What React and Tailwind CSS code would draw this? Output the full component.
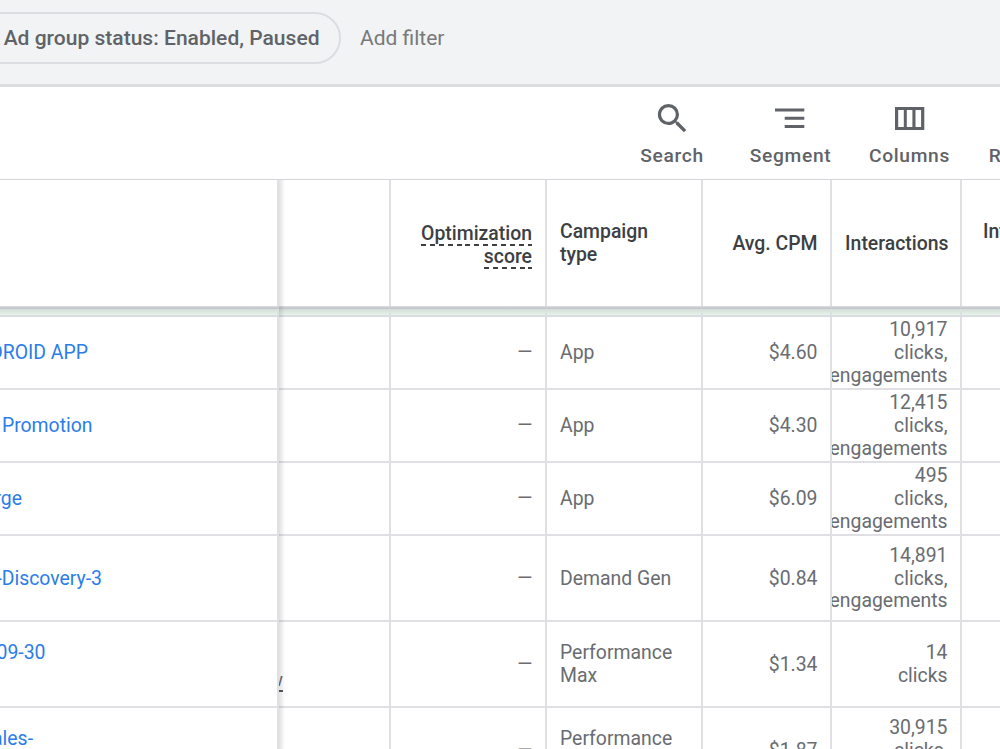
const CAMPAIGNS = [
  {
    name: ["DROID APP"],
    end: 88,
    type: "App",
    cpm: "$4.60",
    interactions: ["10,917", "clicks,", "engagements"],
    height: "h-[73px]",
  },
  {
    name: ["App Promotion"],
    end: 92.5,
    type: "App",
    cpm: "$4.30",
    interactions: ["12,415", "clicks,", "engagements"],
    height: "h-[73px]",
  },
  {
    name: ["Surge"],
    end: 22,
    type: "App",
    cpm: "$6.09",
    interactions: ["495", "clicks,", "engagements"],
    height: "h-[73px]",
  },
  {
    name: ["-Discovery-3"],
    end: 102,
    type: "Demand Gen",
    cpm: "$0.84",
    interactions: ["14,891", "clicks,", "engagements"],
    height: "h-[86px]",
  },
  {
    name: ["09-30", "\u00a0"],
    end: 45.5,
    type: "Performance Max",
    cpm: "$1.34",
    interactions: ["14", "clicks"],
    height: "h-[86px]",
    status: "w",
  },
  {
    name: ["Sales-", "\u00a0"],
    end: 33,
    type: "Performance Max",
    cpm: "$1.87",
    interactions: ["30,915", "clicks,", "engagements"],
    height: "h-[86px]",
  },
];

function SearchIcon() {
  return (
    <svg viewBox="0 0 24 24" className="size-[39px]" fill="currentColor">
      <path d="M15.5 14h-.79l-.28-.27A6.471 6.471 0 0 0 16 9.5 6.5 6.5 0 1 0 9.5 16c1.61 0 3.09-.59 4.23-1.57l.27.28v.79l5 4.99L20.49 19l-4.99-5zm-6 0C7.01 14 5 11.99 5 9.5S7.01 5 9.5 5 14 7.01 14 9.5 11.99 14 9.5 14z" />
    </svg>
  );
}

function SegmentIcon() {
  return (
    <svg viewBox="0 0 39 39" className="size-[39px]" fill="currentColor">
      <path d="M4 9.5h29.3v3H4zM13.7 17.7h19.6v3H13.7zM13.7 25.9h19.6v3H13.7z" />
    </svg>
  );
}

function ColumnsIcon() {
  return (
    <svg viewBox="0 0 39 39" className="size-[39px]" fill="currentColor" fillRule="evenodd">
      <path d="M5 8h29.3v23H5zM8.2 11v17h5.6V11zM16.8 11v17h5.6V11zM25.5 11v17h5.6V11z" />
    </svg>
  );
}

function ToolbarButton({ icon, label, className }) {
  return (
    <button className={`flex shrink-0 flex-col items-center ${className}`}>
      {icon}
      <span className="mt-[6px] text-[19.2px] leading-[24px] font-medium tracking-[0.7px]">{label}</span>
    </button>
  );
}

function Cell({ className, children }) {
  return (
    <div className={`flex shrink-0 items-center overflow-hidden border-r-2 border-[#e0e0e4] pt-[2px] ${className}`}>
      {children}
    </div>
  );
}

function HeaderRow() {
  return (
    <div className="flex h-[126px] w-[1140px] shrink-0 text-[19.4px] leading-[22.75px] font-medium text-[#3c4043]">
      <Cell className="w-[279px]" />
      <Cell className="w-[112px]" />
      <Cell className="w-[156px] justify-end pr-[13px] text-right">
        <div className="flex flex-col items-end pt-[4px]">
          {["Optimization", "score"].map((word) => (
            <span
              key={word}
              className="h-[23px] bg-[repeating-linear-gradient(to_right,#3c4043_0_5px,transparent_5px_8.9px)] bg-[length:100%_2px] bg-bottom bg-no-repeat pt-px leading-[20px]"
            >
              {word}
            </span>
          ))}
        </div>
      </Cell>
      <Cell className="w-[156px] pl-[13px]">
        <span className="w-[100px]">Campaign type</span>
      </Cell>
      <Cell className="w-[129px] justify-end pr-[12.5px]">Avg. CPM</Cell>
      <Cell className="w-[130px] justify-end pr-[11.5px]">Interactions</Cell>
      <div className="flex w-[130px] shrink-0 items-center pt-[2px] pl-[21px]">
        <div className="text-right">
          <div>Interaction</div>
          <div>rate</div>
        </div>
      </div>
    </div>
  );
}

function CampaignRow({ campaign }) {
  return (
    <div className={`flex w-[1140px] shrink-0 border-b-2 border-[#e0e0e4] text-[19.4px] leading-[22.75px] text-[#696c71] ${campaign.height}`}>
      <Cell className="w-[279px] text-[#2b7de9]">
        <div className="flex shrink-0 justify-end whitespace-nowrap" style={{ width: campaign.end }}>
          <div>
            {campaign.name.map((line) => (
              <div key={line}>{line}</div>
            ))}
          </div>
        </div>
      </Cell>
      <Cell className="w-[112px]">
        {campaign.status && (
          <div className="flex w-[4px] justify-end self-end overflow-hidden pb-[14px]">
            <span className="border-b-2 border-[#55585d] text-[19px] leading-[20px]">{campaign.status}</span>
          </div>
        )}
      </Cell>
      <Cell className="w-[156px] justify-end pr-[12.5px]">—</Cell>
      <Cell className="w-[156px] pl-[13px]">
        <span className="w-[118px]">{campaign.type}</span>
      </Cell>
      <Cell className="w-[129px] justify-end pr-[12.5px]">{campaign.cpm}</Cell>
      <Cell className="w-[130px] justify-end pr-[12.5px] text-right">
        <div>
          {campaign.interactions.map((line) => (
            <div key={line}>{line}</div>
          ))}
        </div>
      </Cell>
    </div>
  );
}

export default function App() {
  return (
    <div className="flex h-[749px] w-[1000px] flex-col overflow-hidden bg-white font-[Roboto,sans-serif] text-[#5f6368]">
      <div className="flex h-[87px] shrink-0 items-start border-b-3 border-[#dcdde2] bg-[#f1f3f4] pt-[12px] text-[21px]">
        <div className="-ml-[30px] flex h-[52px] w-[370.5px] shrink-0 items-center justify-end rounded-full border-2 border-[#dcdde2] pt-[2px] pr-[19px] font-medium tracking-[0.02px] whitespace-nowrap">
          Ad group status: Enabled, Paused
        </div>
        <div className="ml-[19.5px] flex h-[52px] items-center pt-[2px] text-[#77797b]">Add filter</div>
      </div>

      <div className="flex h-[92px] shrink-0 overflow-hidden pt-[12px] pl-[612px]">
        <ToolbarButton icon={<SearchIcon />} label="Search" className="w-[120px]" />
        <ToolbarButton icon={<SegmentIcon />} label="Segment" className="w-[117px]" />
        <ToolbarButton icon={<ColumnsIcon />} label="Columns" className="w-[121px]" />
        <ToolbarButton icon={<span className="h-[39px]" />} label="Reports" className="w-[110px]" />
      </div>

      <div className="relative flex flex-1 flex-col overflow-hidden border-t-[1px] border-[#d4d5d9]">
        <HeaderRow />
        <div className="h-[3px] shrink-0 bg-linear-to-b from-[#dadae0] to-[#bfc1c7]" />
        <div className="flex h-[8px] w-[1140px] shrink-0 border-b-2 border-[#dadce0] bg-linear-to-b from-[#d3ddd7] to-[#e6f4ea]">
          <Cell className="w-[279px]" />
          <Cell className="w-[112px]" />
          <Cell className="w-[156px]" />
          <Cell className="w-[156px]" />
          <Cell className="w-[129px]" />
          <Cell className="w-[130px]" />
        </div>
        {CAMPAIGNS.map((campaign, i) => (
          <CampaignRow key={i} campaign={campaign} />
        ))}
        {/* shadow cast by the frozen name column */}
        <div className="absolute inset-y-0 left-[279px] w-[6px] bg-linear-to-r from-black/12 to-transparent" />
      </div>
    </div>
  );
}
